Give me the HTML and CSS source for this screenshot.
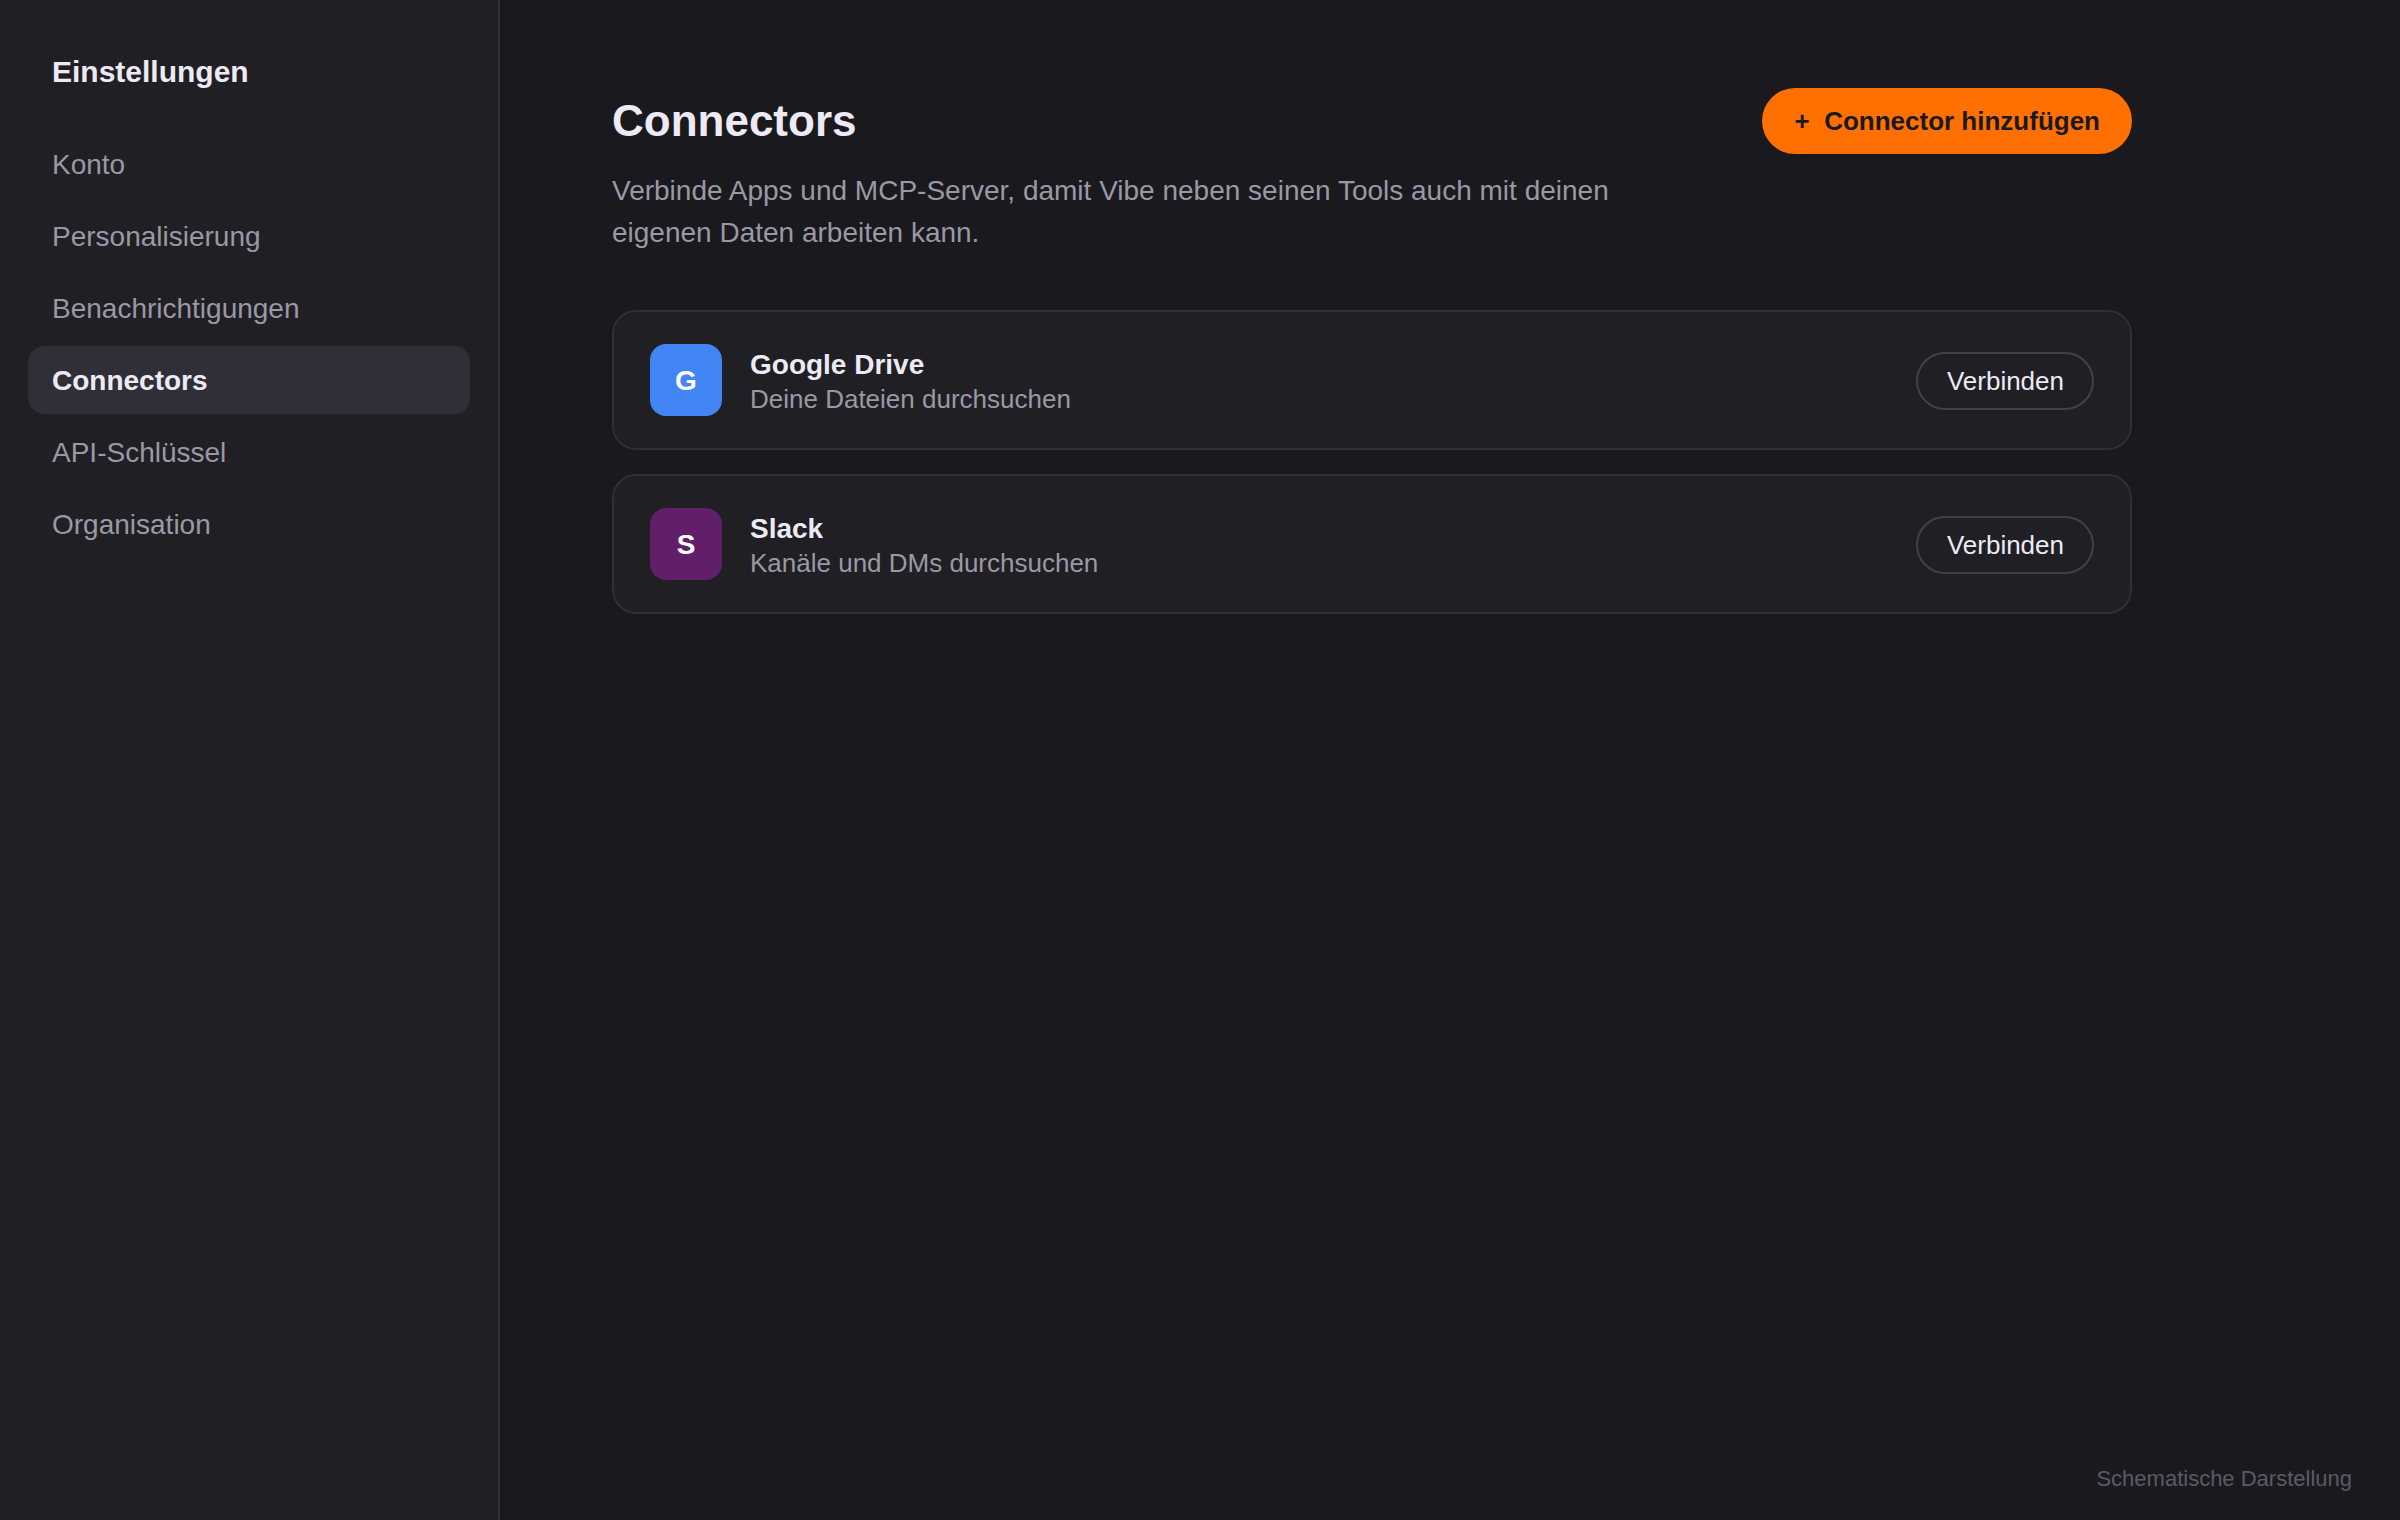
FILE: index.html
```html
<!DOCTYPE html>
<html lang="de">
<head>
<meta charset="utf-8">
<title>Einstellungen – Connectors</title>
<link rel="stylesheet" href="styles.css">
</head>
<body>
<div class="app">
  <aside class="sidebar">
    <div class="sidebar-title">Einstellungen</div>
    <nav class="nav">
      <a class="nav-item">Konto</a>
      <a class="nav-item">Personalisierung</a>
      <a class="nav-item">Benachrichtigungen</a>
      <a class="nav-item active">Connectors</a>
      <a class="nav-item">API-Schlüssel</a>
      <a class="nav-item">Organisation</a>
    </nav>
  </aside>
  <main class="main">
    <div class="content">
      <header class="header">
        <h1 class="title">Connectors</h1>
        <button class="add-button">+&nbsp; Connector hinzufügen</button>
      </header>
      <p class="intro">Verbinde Apps und MCP-Server, damit Vibe neben seinen Tools auch mit deinen eigenen Daten arbeiten kann.</p>
      <div class="cards">
        <section class="card">
          <div class="logo logo-drive">G</div>
          <div class="info">
            <div class="name">Google Drive</div>
            <div class="description">Deine Dateien durchsuchen</div>
          </div>
          <button class="connect">Verbinden</button>
        </section>
        <section class="card">
          <div class="logo logo-slack">S</div>
          <div class="info">
            <div class="name">Slack</div>
            <div class="description">Kanäle und DMs durchsuchen</div>
          </div>
          <button class="connect">Verbinden</button>
        </section>
      </div>
    </div>
    <footer class="note">Schematische Darstellung</footer>
  </main>
</div>
</body>
</html>
```
FILE: styles.css
```css
* {
  box-sizing: border-box;
}

body {
  margin: 0;
  background: #1a191d;
  color: #edeaf6;
  font-family: "Liberation Sans", Arial, sans-serif;
  font-size: 28px;
  line-height: 32px;
}

button {
  font: inherit;
  white-space: nowrap;
}

.app {
  display: flex;
  height: 100vh;
}

.sidebar {
  flex: none;
  width: 500px;
  padding: 55px 28px;
  background: #201f24;
  border-right: 2px solid #302e36;
}

.sidebar-title {
  margin-bottom: 41px;
  padding-left: 24px;
  font-size: 30px;
  font-weight: 700;
  line-height: 34px;
}

.nav {
  display: flex;
  flex-direction: column;
  gap: 4px;
}

.nav-item {
  padding: 19px 24px 17px;
  border-radius: 16px;
  color: #9b98a6;
}

.nav-item.active {
  background: #302e37;
  color: #edeaf6;
  font-weight: 700;
}

.main {
  display: flex;
  flex: 1;
  flex-direction: column;
  justify-content: space-between;
  padding: 88px 48px 28px 112px;
}

.content {
  width: 1520px;
}

.header {
  display: flex;
  align-items: center;
  justify-content: space-between;
}

.title {
  margin: 0;
  font-size: 44px;
  font-weight: 700;
  line-height: 50px;
}

.add-button {
  padding: 18px 32px 18px 33px;
  border: 0;
  border-radius: 33px;
  background: #ff7000;
  color: #1a191d;
  font-size: 26px;
  font-weight: 700;
  line-height: 30px;
}

.intro {
  max-width: 1040px;
  margin: 16px 0 56px;
  color: #9b98a6;
  line-height: 42px;
}

.cards {
  display: flex;
  flex-direction: column;
  gap: 24px;
}

.card {
  display: flex;
  align-items: center;
  gap: 28px;
  height: 140px;
  padding: 0 36px;
  border: 2px solid #302e36;
  border-radius: 24px;
  background: #201f24;
}

.logo {
  display: grid;
  flex: none;
  width: 72px;
  height: 72px;
  padding-top: 2px;
  place-items: center;
  border-radius: 16px;
  color: #fff;
  font-weight: 700;
}

.logo-drive {
  background: #4285f4;
}

.logo-slack {
  background: #611f69;
}

.info {
  flex: 1;
  padding-top: 3px;
}

.name {
  margin-bottom: 3px;
  font-weight: 700;
}

.description {
  color: #9b98a6;
  font-size: 26px;
  line-height: 30px;
}

.connect {
  margin-top: 2px;
  padding: 12px 28px 12px 29px;
  border: 2px solid #43404b;
  border-radius: 29px;
  background: transparent;
  color: #edeaf6;
  font-size: 26px;
  line-height: 30px;
}

.note {
  align-self: flex-end;
  color: #5c5966;
  font-size: 22px;
  line-height: 26px;
}
```
